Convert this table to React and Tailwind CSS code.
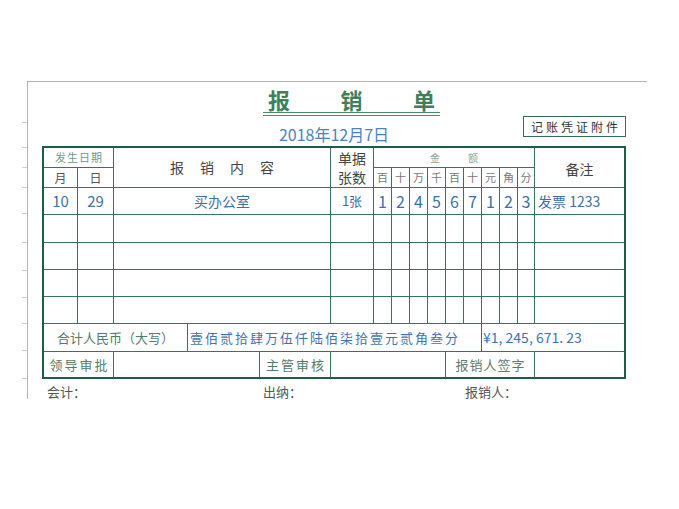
const ticks = [42, 25, 20, 20, 26, 29, 28, 27, 26, 27, 28]
const digitHeads = ['百', '十', '万', '千', '百', '十', '元', '角', '分']
const amount = ['1', '2', '4', '5', '6', '7', '1', '2', '3']

function Cell({ className = '', children }) {
  return <div className={`flex items-center justify-center bg-white ${className}`}>{children}</div>
}

export default function App() {
  return (
    <div className="h-[509px] w-[679px] overflow-hidden bg-white pt-[81px] pl-[22px] font-['Noto_Sans_CJK_SC',sans-serif]">
      <div className="flex">
        {/* spreadsheet row ticks */}
        <div className="flex w-[5px] flex-col">
          {ticks.map((h, i) => (
            <div key={i} style={{ height: h }} className="border-b border-[#cfcfcf]" />
          ))}
        </div>

        <div className="h-[318px] w-[620px] border-l border-t border-[#b3b3b3] pl-[14px]">
          {/* title */}
          <div className="ml-[221px] mt-[6px] w-[177px]">
            <div className="flex justify-between border-b border-[#4a8a68] px-[5px] pb-[2px] text-[22px] font-bold leading-[22px] text-[#3f7f5c]">
              <span>报</span>
              <span>销</span>
              <span>单</span>
            </div>
            <div className="mt-[2px] h-px bg-[#4a8a68]" />
          </div>

          {/* date + attachment box */}
          <div className="grid h-[30px] w-[584px] grid-cols-[1fr_auto_1fr]">
            <div />
            <div className="mt-[10px] text-[16px] leading-[16px] text-[#4f81bd]">2018年12月7日</div>
            <div className="flex h-[21px] w-[103px] items-center justify-center justify-self-end border border-[#3b6b58] pl-[3px] text-[12px] leading-none tracking-[3px] text-[#333]">
              记账凭证附件
            </div>
          </div>

          {/* main form */}
          <div className="w-[584px] border-2 border-[#1f5c45]">
            <div className="grid grid-cols-[33px_35px_216px_42px_17px_17px_17px_17px_17px_17px_17px_17px_16px_89px] grid-rows-[19px_19px_26px_27px_26px_26px_26px] gap-px bg-[#3a735d]">
              <Cell className="col-span-2 pl-[1px] text-[11px] tracking-[1px] text-[#7a9488]">发生日期</Cell>
              <Cell className="row-span-2 pl-[16px] text-[14px] tracking-[16px] text-[#444]">报销内容</Cell>
              <Cell className="row-span-2 flex-col text-[14px] leading-[19px] text-[#444]">
                <span>单据</span>
                <span>张数</span>
              </Cell>
              <Cell className="col-span-9 text-[10px] text-[#8aa89a]">
                <span>金</span>
                <span className="ml-[28px]">额</span>
              </Cell>
              <Cell className="row-span-2 pt-[4px] text-[14px] text-[#444]">备注</Cell>

              <Cell className="text-[12px] text-[#555]">月</Cell>
              <Cell className="text-[12px] text-[#555]">日</Cell>
              {digitHeads.map((d, i) => (
                <Cell key={i} className="text-[11px] text-[#777]">{d}</Cell>
              ))}

              {/* filled row */}
              <Cell className="text-[15px] text-[#3d6fa8]">10</Cell>
              <Cell className="text-[15px] text-[#3d6fa8]">29</Cell>
              <Cell className="text-[14px] text-[#3d6fa8]">买办公室</Cell>
              <Cell className="text-[13px] text-[#3d6fa8]">1张</Cell>
              {amount.map((d, i) => (
                <Cell key={i} className="text-[16px] text-[#3d6fa8]">{d}</Cell>
              ))}
              <Cell className="justify-start pl-[3px] text-[14px] text-[#3d6fa8]">发票 1233</Cell>

              {Array.from({ length: 4 * 14 }).map((_, i) => (
                <div key={i} className="bg-white" />
              ))}
            </div>

            <div className="flex h-[28px] border-t border-[#3a735d]">
              <div className="flex w-[144px] items-center justify-center border-r border-[#3a735d] text-[13px] text-[#557a69]">
                合计人民币（大写）
              </div>
              <div className="flex w-[294px] items-center border-r border-[#3a735d] pl-[2px] text-[13px] tracking-[2px] text-[#3f72b0]">
                壹佰贰拾肆万伍仟陆佰柒拾壹元贰角叁分
              </div>
              <div className="flex flex-1 items-center pl-[1px] text-[14px] text-[#3f72b0]">¥1, 245, 671. 23</div>
            </div>

            <div className="flex h-[26px] border-t border-[#3a735d] text-[13px] tracking-[2px] text-[#557a69]">
              <div className="flex w-[70px] items-center justify-center border-r border-[#3a735d] pl-[2px]">领导审批</div>
              <div className="w-[146px] border-r border-[#3a735d]" />
              <div className="flex w-[71px] items-center justify-center border-r border-[#3a735d] pl-[2px]">主管审核</div>
              <div className="w-[115px] border-r border-[#3a735d]" />
              <div className="flex w-[89px] items-center justify-center border-r border-[#3a735d] pl-[1px] tracking-[1px] text-[#66786d]">
                报销人签字
              </div>
              <div className="flex-1" />
            </div>
          </div>

          {/* signatures */}
          <div className="mt-[6px] flex pl-[5px] text-[13px] leading-[13px] text-[#555]">
            <span className="w-[216px]">会计：</span>
            <span className="w-[202px]">出纳：</span>
            <span>报销人：</span>
          </div>
        </div>
      </div>
    </div>
  )
}
